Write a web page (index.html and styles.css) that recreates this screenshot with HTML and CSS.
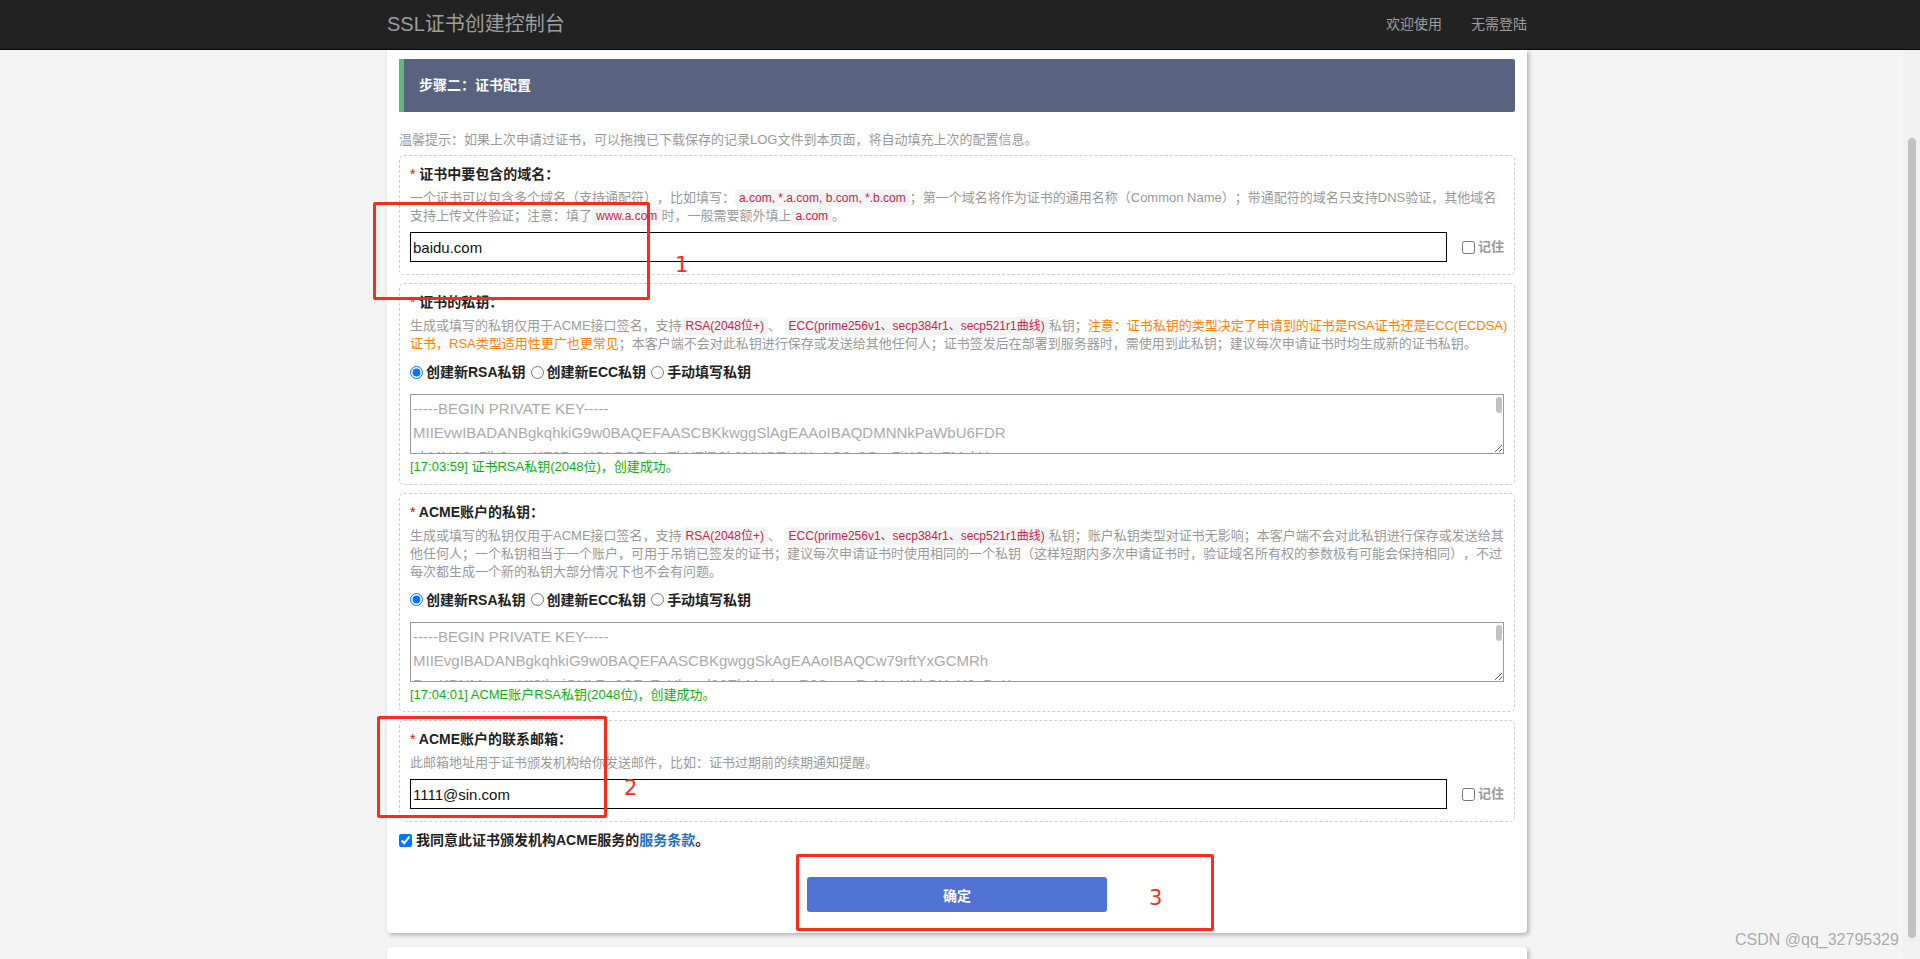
FILE: index.html
```html
<!DOCTYPE html>
<html lang="zh-CN">
<head>
<meta charset="utf-8">
<title>SSL证书创建控制台</title>
<link rel="stylesheet" href="styles.css">
</head>
<body>
<header class="topbar">
  <div class="topbar-inner">
    <span class="brand">SSL证书创建控制台</span>
    <nav class="nav"><a class="nav-link">欢迎使用</a><a class="nav-link">无需登陆</a></nav>
  </div>
</header>
<div class="shell">
  <main class="content">
    <section class="panel">
      <div class="step-head">步骤二：证书配置</div>
      <p class="tip">温馨提示：如果上次申请过证书，可以拖拽已下载保存的记录LOG文件到本页面，将自动填充上次的配置信息。</p>

      <div class="field">
        <div class="field-label"><span class="req">*</span> 证书中要包含的域名：</div>
        <div class="desc">一个证书可以包含多个域名（支持通配符），比如填写：<code class="tag">a.com, *.a.com, b.com, *.b.com</code>；第一个域名将作为证书的通用名称（Common Name）；带通配符的域名只支持DNS验证，其他域名<br>支持上传文件验证；注意：填了<code class="tag">www.a.com</code>时，一般需要额外填上<code class="tag">a.com</code>。</div>
        <div class="input-row">
          <input class="text-input" type="text" value="baidu.com">
          <label class="remember"><input class="chk" type="checkbox"> 记住</label>
        </div>
      </div>

      <div class="field field-key">
        <div class="field-label"><span class="req">*</span> 证书的私钥：</div>
        <div class="desc">生成或填写的私钥仅用于ACME接口签名，支持<code class="tag">RSA(2048位+)</code>、 <code class="tag">ECC(prime256v1、secp384r1、secp521r1曲线)</code>私钥；<span class="warn">注意：证书私钥的类型决定了申请到的证书是RSA证书还是ECC(ECDSA)</span><br><span class="warn">证书，RSA类型适用性更广也更常见</span>；本客户端不会对此私钥进行保存或发送给其他任何人；证书签发后在部署到服务器时，需使用到此私钥；建议每次申请证书时均生成新的证书私钥。</div>
        <div class="radio-row">
          <label class="radio-item"><input class="rad" type="radio" name="k1" checked>创建新RSA私钥</label>
          <label class="radio-item"><input class="rad" type="radio" name="k1">创建新ECC私钥</label>
          <label class="radio-item"><input class="rad" type="radio" name="k1">手动填写私钥</label>
        </div>
        <div class="key-wrap">
          <textarea class="key-area" readonly>-----BEGIN PRIVATE KEY-----
MIIEvwIBADANBgkqhkiG9w0BAQEFAASCBKkwggSlAgEAAoIBAQDMNNkPaWbU6FDR
xhMNA2p5lbJwzqKZ8PmHOLPOEr1gThYZlR3k6MYOTzYKvAQ2y3QrgFjKQ4a7MzkU
Hq0Yx3wKcN8uTt2oV1dG6sPbVxg4r7ZcJmWq9fLh0nIeS5aBtD3kRpXoEy2uNvGi
Ab7LmQs4cWzFhT0oK9dJ1xNeVgYpR8uC2iMwS6tHfl3EqO5bDzUaK7jXnPv4rIyG
Lc9sTgWm1oZbQe3NhFd8KpYu0xRjVtA6iCw2SnEqMf5LoB7gHzD4yXUkr3vJPaI9
-----END PRIVATE KEY-----</textarea>
          <span class="key-thumb"></span>
        </div>
        <div class="msg">[17:03:59] 证书RSA私钥(2048位)，创建成功。</div>
      </div>

      <div class="field field-key">
        <div class="field-label"><span class="req">*</span> ACME账户的私钥：</div>
        <div class="desc">生成或填写的私钥仅用于ACME接口签名，支持<code class="tag">RSA(2048位+)</code>、 <code class="tag">ECC(prime256v1、secp384r1、secp521r1曲线)</code>私钥；账户私钥类型对证书无影响；本客户端不会对此私钥进行保存或发送给其<br>他任何人；一个私钥相当于一个账户，可用于吊销已签发的证书；建议每次申请证书时使用相同的一个私钥（这样短期内多次申请证书时，验证域名所有权的参数极有可能会保持相同），不过<br>每次都生成一个新的私钥大部分情况下也不会有问题。</div>
        <div class="radio-row">
          <label class="radio-item"><input class="rad" type="radio" name="k2" checked>创建新RSA私钥</label>
          <label class="radio-item"><input class="rad" type="radio" name="k2">创建新ECC私钥</label>
          <label class="radio-item"><input class="rad" type="radio" name="k2">手动填写私钥</label>
        </div>
        <div class="key-wrap">
          <textarea class="key-area" readonly>-----BEGIN PRIVATE KEY-----
MIIEvgIBADANBgkqhkiG9w0BAQEFAASCBKgwggSkAgEAAoIBAQCw79rftYxGCMRh
BqyKBNMnaqwHI8IbeiGXLRq0SFqZsHhuvd86EbMsdmrcR98ampRvNxuWtkGXpX6aBuK
pJ3bV0sT7wQmYc1hZk5rLxN2uE8dFgA4oW9iKeV6tCjR0yHnM3lPq7aUzDsGbO1f
Xw2Ls5vQe8KdTj4cMnH7yFu0gRbZpA3iVoE9kN6lWm1qYtJxC2sDhU5rBfz8aGiO
hT4oNcV9eLk2bWjQ1pMsY7uRgAxD3fK0iEz6vHnPy5lJqXoB8tCwGmUa4rSd2FeZ
-----END PRIVATE KEY-----</textarea>
          <span class="key-thumb"></span>
        </div>
        <div class="msg">[17:04:01] ACME账户RSA私钥(2048位)，创建成功。</div>
      </div>

      <div class="field">
        <div class="field-label"><span class="req">*</span> ACME账户的联系邮箱：</div>
        <div class="desc">此邮箱地址用于证书颁发机构给你发送邮件，比如：证书过期前的续期通知提醒。</div>
        <div class="input-row">
          <input class="text-input" type="text" value="1111@sin.com">
          <label class="remember"><input class="chk" type="checkbox"> 记住</label>
        </div>
      </div>

      <label class="agree"><input class="chk-agree" type="checkbox" checked>我同意此证书颁发机构ACME服务的<a class="terms">服务条款</a>。</label>

      <div class="actions"><button class="btn-primary" type="button">确定</button></div>
    </section>
    <section class="panel panel-next"></section>
  </main>
  <div class="vscroll"><div class="vscroll-thumb"></div></div>
</div>

<div class="annot annot-1"></div>
<span class="annot-num num-1">1</span>
<div class="annot annot-2"></div>
<span class="annot-num num-2">2</span>
<div class="annot annot-3"></div>
<span class="annot-num num-3">3</span>
<span class="watermark">CSDN @qq_32795329</span>
</body>
</html>
```
FILE: styles.css
```css
html, body {
  margin: 0;
  padding: 0;
  height: 100%;
  overflow: hidden;
}

body {
  background: #f4f4f4;
  font-family: "Liberation Sans", Arial, "Noto Sans CJK SC", sans-serif;
  font-size: 13px;
  line-height: 1.42857;
  color: #333;
  text-spacing-trim: space-all;
}

/* ---------- top bar ---------- */
.topbar {
  height: 50px;
  box-sizing: border-box;
  background: #222;
  border-bottom: 1px solid #080808;
  padding: 0 17px 0 11px;
}

.topbar-inner {
  width: 1140px;
  margin: 0 auto;
  height: 49px;
  display: flex;
  align-items: center;
  justify-content: space-between;
}

.brand {
  font-size: 20px;
  color: #9d9d9d;
  line-height: 49px;
}

.nav {
  display: flex;
  gap: 29px;
}

.nav-link {
  font-size: 14px;
  color: #9d9d9d;
  line-height: 49px;
}

/* ---------- shell ---------- */
.shell {
  display: flex;
  height: calc(100vh - 50px);
  overflow: hidden;
}

.content {
  flex: 1;
  overflow: hidden;
  padding-left: 11px;
}

.vscroll {
  width: 17px;
  background: #f1f1f1;
  display: flex;
  flex-direction: column;
  align-items: center;
}

.vscroll-thumb {
  margin-top: 88px;
  width: 8px;
  height: 800px;
  border-radius: 4px;
  background: #c1c1c1;
}

/* ---------- panel ---------- */
.panel {
  width: 1140px;
  margin: 0 auto;
  box-sizing: border-box;
  background: #fff;
  padding: 9px 12px 21px;
  box-shadow: 2px 2px 4px rgba(0, 0, 0, 0.28);
  border-radius: 0 0 4px 4px;
}

.panel-next {
  margin-top: 14px;
  height: 60px;
  border-radius: 4px 4px 0 0;
}

.step-head {
  height: 53px;
  line-height: 53px;
  background: #58637f;
  border-left: 5px solid #5fb878;
  border-radius: 0 2px 2px 0;
  padding-left: 15px;
  color: #fff;
  font-size: 14px;
  font-weight: bold;
}

.tip {
  margin: 19px 0 6px;
  color: #999;
  font-size: 13px;
  line-height: 18px;
}

/* ---------- fields ---------- */
.field {
  border: 1px dashed #cfcfcf;
  border-radius: 5px;
  padding: 8px 10px 12px;
  margin-bottom: 8px;
}

.field-key {
  padding-bottom: 7px;
}

.field-label {
  font-size: 14px;
  line-height: 20px;
  font-weight: bold;
  color: #222;
}

.req {
  color: #e00;
  font-weight: normal;
}

.desc {
  margin-top: 5px;
  font-size: 13px;
  line-height: 18px;
  color: #999;
  white-space: nowrap;
}

.tag {
  font-family: "Liberation Sans", Arial, "Noto Sans CJK SC", sans-serif;
  font-size: 12px;
  color: #c7254e;
  background: #f4f4f4;
  padding: 2px 4px;
  border-radius: 4px;
}

.warn {
  color: #ff8000;
}

.input-row {
  display: flex;
  align-items: center;
  margin-top: 7px;
}

.text-input {
  flex: 1;
  height: 30px;
  box-sizing: border-box;
  border: 1px solid #000;
  padding: 0 2px;
  font-family: "Liberation Sans", Arial, sans-serif;
  font-size: 15px;
  color: #111;
  outline: none;
}

.remember {
  margin-left: 15px;
  font-size: 13px;
  font-weight: bold;
  color: #999;
  display: flex;
  align-items: center;
}

.chk {
  width: 13px;
  height: 13px;
  margin: 0 3px 0 0;
}

.radio-row {
  margin-top: 9px;
  font-size: 14px;
  line-height: 20px;
  font-weight: bold;
  color: #222;
  display: flex;
  gap: 5px;
}

.radio-item {
  display: inline-flex;
  align-items: center;
}

.rad {
  width: 13px;
  height: 13px;
  margin: 0 3px 0 0;
}

.key-wrap {
  position: relative;
  margin-top: 12px;
}

.key-area {
  display: block;
  width: 100%;
  height: 60px;
  box-sizing: border-box;
  border: 1px solid #999;
  padding: 2px 12px 2px 2px;
  font-family: "Liberation Sans", Arial, sans-serif;
  font-size: 15px;
  line-height: 24px;
  color: #aaa;
  resize: vertical;
  overflow: hidden;
  white-space: pre;
  outline: none;
}

.key-thumb {
  position: absolute;
  right: 2px;
  top: 3px;
  width: 6px;
  height: 16px;
  border-radius: 3px;
  background: #c1c1c1;
}

.msg {
  margin-top: 4px;
  color: #0fae0f;
  font-size: 13px;
}

/* ---------- agreement & button ---------- */
.agree {
  display: flex;
  align-items: center;
  margin-top: 2px;
  font-size: 14px;
  line-height: 20px;
  font-weight: bold;
  color: #222;
}

.chk-agree {
  width: 13px;
  height: 13px;
  margin: 0 4px 0 0;
}

.terms {
  color: #1c6ec6;
}

.actions {
  display: flex;
  justify-content: center;
  margin-top: 27px;
}

.btn-primary {
  width: 300px;
  height: 35px;
  border: none;
  border-radius: 3px;
  background: #4f72d3;
  color: #fff;
  font-family: "Liberation Sans", Arial, "Noto Sans CJK SC", sans-serif;
  font-size: 14px;
  font-weight: bold;
}

/* ---------- annotations (drawn over the page) ---------- */
.annot {
  position: absolute;
  border: 3px solid #ff2a1a;
  border-radius: 2px;
  box-sizing: border-box;
}

.annot-1 { left: 373px; top: 202px; width: 277px; height: 98px; }
.annot-2 { left: 377px; top: 716px; width: 230px; height: 102px; }
.annot-3 { left: 796px; top: 854px; width: 418px; height: 77px; }

.annot-num {
  position: absolute;
  font-family: "DejaVu Sans", sans-serif;
  font-size: 21px;
  line-height: 24px;
  color: #ff2a1a;
}

.num-1 { left: 675px; top: 253px; }
.num-2 { left: 624px; top: 776px; }
.num-3 { left: 1149px; top: 886px; }

.watermark {
  position: absolute;
  left: 1735px;
  top: 930px;
  font-family: "Liberation Sans", Arial, sans-serif;
  font-size: 16px;
  line-height: 20px;
  color: #a8a8a8;
  text-shadow: 0 0 1px #fff, 0 0 1px #fff;
}
```
